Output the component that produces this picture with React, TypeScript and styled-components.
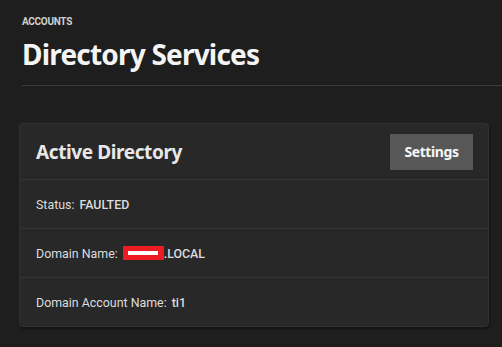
import React from 'react';
import styled, { createGlobalStyle } from 'styled-components';

const GlobalStyle = createGlobalStyle`
  html, body {
    margin: 0;
    padding: 0;
    background: #1e1e1e;
  }
  body {
    font-family: Roboto, "Liberation Sans", sans-serif;
    color: #e6e6e6;
  }
`;

const s = {
  Page: styled.div`
    width: 502px;
    height: 347px;
    overflow: hidden;
    padding: 16px 0 0 22px;
    box-sizing: border-box;
  `,
  Crumb: styled.div`
    font-size: 10px;
    font-weight: 700;
    color: #d0d0d0;
    letter-spacing: -0.3px;
    line-height: 12px;
  `,
  Title: styled.h1`
    margin: 10px 0 0;
    font-family: "Noto Sans", sans-serif;
    font-size: 28px;
    font-weight: 700;
    letter-spacing: -0.8px;
    line-height: 32px;
    color: #f4f4f4;
  `,
  Divider: styled.hr`
    margin: 15px 0 0;
    border: 0;
    border-top: 1px solid #3a3a3a;
  `,
  Card: styled.section`
    margin: 37px 0 0 -3px;
    width: 468px;
    background: #282828;
    border: 1px solid #323232;
    border-radius: 4px;
    box-shadow: 1px 2px 2px rgba(0, 0, 0, 0.35);
  `,
  CardHeader: styled.div`
    display: flex;
    justify-content: space-between;
    align-items: center;
    height: 55px;
    padding: 0 15px 0 16px;
    border-bottom: 1px solid #353535;
  `,
  CardTitle: styled.h2`
    margin: 0;
    font-family: "Noto Sans", sans-serif;
    font-size: 19px;
    font-weight: 700;
    letter-spacing: -0.4px;
    color: #e8e8e8;
  `,
  Button: styled.button`
    width: 83px;
    height: 36px;
    border: 0;
    background: #575757;
    color: #f6f6f6;
    font-family: "Noto Sans", sans-serif;
    font-size: 14px;
    font-weight: 700;
    letter-spacing: -0.4px;
  `,
  Row: styled.div<{ last?: boolean }>`
    display: flex;
    align-items: center;
    height: 48px;
    padding-left: 16px;
    font-size: 12.4px;
    color: #dcdcdc;
    border-bottom: ${(p) => (p.last ? 'none' : '1px solid #353535')};
  `,
  Label: styled.span`
    margin-right: 5px;
  `,
  Value: styled.span`
    font-weight: 500;
    display: flex;
    align-items: center;
  `,
  Redact: styled.span`
    display: inline-flex;
    align-items: center;
    justify-content: center;
    width: 41px;
    height: 14px;
    background: #ec1c24;
  `,
  RedactBar: styled.span`
    width: 30px;
    height: 4px;
    background: #ffffff;
  `,
};

const App = (): JSX.Element => {
  return (
    <>
      <GlobalStyle />
      <s.Page>
        <s.Crumb>ACCOUNTS</s.Crumb>
        <s.Title>Directory Services</s.Title>
        <s.Divider />
        <s.Card>
          <s.CardHeader>
            <s.CardTitle>Active Directory</s.CardTitle>
            <s.Button>Settings</s.Button>
          </s.CardHeader>
          <s.Row>
            <s.Label>Status:</s.Label>
            <s.Value>FAULTED</s.Value>
          </s.Row>
          <s.Row>
            <s.Label>Domain Name:</s.Label>
            <s.Value>
              <s.Redact>
                <s.RedactBar />
              </s.Redact>
              .LOCAL
            </s.Value>
          </s.Row>
          <s.Row last>
            <s.Label>Domain Account Name:</s.Label>
            <s.Value>ti1</s.Value>
          </s.Row>
        </s.Card>
      </s.Page>
    </>
  );
};

export default App;
